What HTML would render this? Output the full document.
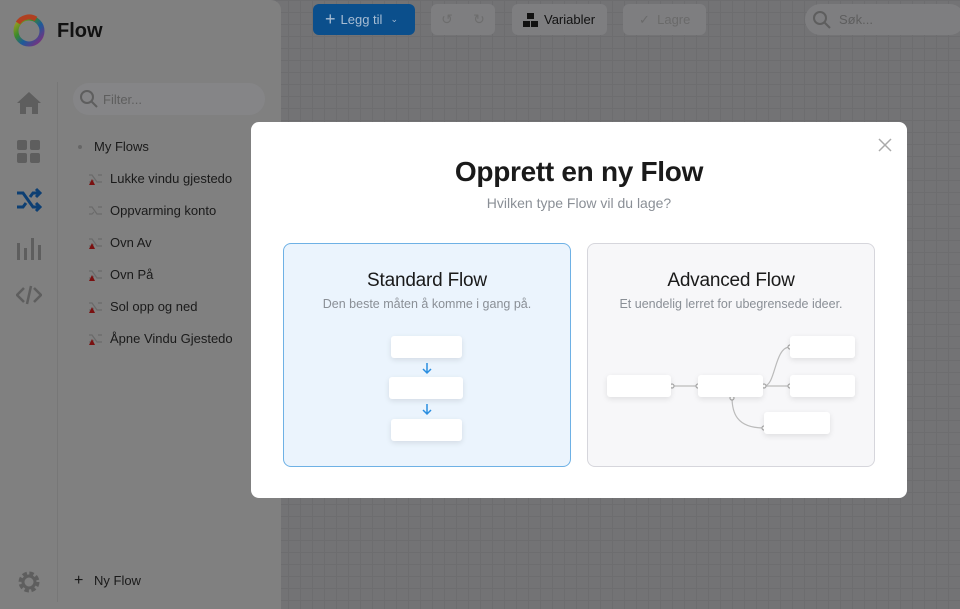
<!DOCTYPE html>
<html><head><meta charset="utf-8"><style>
*{box-sizing:border-box;margin:0;padding:0}
body{width:960px;height:609px;overflow:hidden;position:relative;font-family:"Liberation Sans",sans-serif;background:#737375;
background-image:linear-gradient(#6d6d6f 1px,transparent 1px),linear-gradient(90deg,#6d6d6f 1px,transparent 1px);background-size:12px 12px}
.side{position:absolute;left:0;top:0;width:281px;height:609px;background:#808080;border-radius:0 10px 0 0}
.rail{position:absolute;left:57px;top:82px;width:1px;height:520px;background:#777}
.abs{position:absolute}
.item{position:absolute;left:110px;font-size:13px;color:#1a1a1a}
.btn{position:absolute;top:4px;height:31px;border-radius:6px;background:#7e7e80;font-size:13px;color:#111;display:flex;align-items:center}
.modal{position:absolute;left:251px;top:122px;width:656px;height:376px;background:#fff;border-radius:8px}
.card{position:absolute;top:121px;width:288px;height:224px;border-radius:8px;text-align:center}
.card h2{font-size:19px;font-weight:normal;color:#1a1a1a;margin-top:26px;letter-spacing:-.2px}
.card p{font-size:12.5px;color:#8a8f96;margin-top:5px}
.n{position:absolute;height:22px;background:#fff;border-radius:3px;box-shadow:0 2px 6px rgba(0,0,0,.1)}
</style></head><body>
<div class="side"></div>
<div class="rail"></div>
<svg class="abs" style="left:12px;top:14px" width="34" height="34"><defs><linearGradient id="g" x1="0" y1="0" x2="1" y2="1"><stop offset="0" stop-color="#b2a020"/><stop offset=".35" stop-color="#3a8a2a"/><stop offset=".6" stop-color="#1c5a9a"/><stop offset="1" stop-color="#8a2a7a"/></linearGradient></defs><circle cx="17" cy="17" r="13" fill="none" stroke="url(#g)" stroke-width="5"/><path d="M6 9A13 13 0 0 1 24 5" stroke="#b04020" stroke-width="5" fill="none"/></svg>
<div class="abs" style="left:57px;top:20px;font-size:20px;font-weight:bold;color:#111">Flow</div>
<svg class="abs" style="left:16px;top:90px" width="26" height="26"><path d="M13 2 1 13h3v11h6v-7h6v7h6V13h3z" fill="#5e5e5e"/></svg>
<svg class="abs" style="left:16px;top:139px" width="26" height="26"><rect x="1" y="1" width="10" height="10" rx="2" fill="#5e5e5e"/><rect x="14" y="1" width="10" height="10" rx="2" fill="#5e5e5e"/><rect x="1" y="14" width="10" height="10" rx="2" fill="#5e5e5e"/><rect x="14" y="14" width="10" height="10" rx="2" fill="#5e5e5e"/></svg>
<svg class="abs" style="left:16px;top:187px" width="26" height="26" fill="none" stroke="#0d3f73" stroke-width="3"><path d="M1 6h6l10 14h6M1 20h6l3-4M14 10l3-4h6M20 2l4 4-4 4M20 16l4 4-4 4"/></svg>
<svg class="abs" style="left:16px;top:235px" width="26" height="26" fill="#5e5e5e"><rect x="1" y="8" width="3" height="17"/><rect x="8" y="13" width="3" height="12"/><rect x="15" y="3" width="3" height="22"/><rect x="22" y="10" width="3" height="15"/></svg>
<svg class="abs" style="left:16px;top:284px" width="26" height="22" fill="none" stroke="#5e5e5e" stroke-width="2.5"><path d="M8 4 1 11l7 7M18 4l7 7-7 7M15 2l-4 18"/></svg>
<svg class="abs" style="left:16px;top:569px" width="26" height="26"><circle cx="13" cy="13" r="8" fill="none" stroke="#5e5e5e" stroke-width="5" stroke-dasharray="4 2.3"/><circle cx="13" cy="13" r="6" fill="none" stroke="#5e5e5e" stroke-width="3"/></svg>
<div class="abs" style="left:73px;top:83px;width:192px;height:32px;border-radius:16px;background:#858587"></div>
<svg class="abs" style="left:80px;top:90px" width="18" height="18" fill="none" stroke="#5e5e5e" stroke-width="2"><circle cx="7" cy="7" r="6"/><path d="M11 11l6 6"/></svg>
<div class="abs" style="left:103px;top:92px;font-size:13px;color:#5e5e5e">Filter...</div>
<div class="abs" style="left:78px;top:145px;width:4px;height:4px;border-radius:2px;background:#666"></div>
<div class="abs" style="left:94px;top:139px;font-size:13px;color:#1a1a1a">My Flows</div>
<div class="item" style="top:171px">Lukke vindu gjestedo</div>
<div class="item" style="top:203px">Oppvarming konto</div>
<div class="item" style="top:235px">Ovn Av</div>
<div class="item" style="top:267px">Ovn På</div>
<div class="item" style="top:299px">Sol opp og ned</div>
<div class="item" style="top:331px">Åpne Vindu Gjestedo</div>
<svg class="abs" style="left:88px;top:172px" width="16" height="180"><g id="ic"><path d="M1 3h3l5 7h5M1 10h3l2-2M10 3h4" fill="none" stroke="#6a6a6a" stroke-width="1.2"/><path d="M1 13l3-6 3 6z" fill="#7a1010"/></g><use href="#ic" y="64"/><use href="#ic" y="96"/><use href="#ic" y="128"/><use href="#ic" y="160"/><path d="M1 35h3l5 7h5M1 42h3l2-2M10 35h4" fill="none" stroke="#6a6a6a" stroke-width="1.2"/></svg>
<div class="abs" style="left:74px;top:572px;font-size:16px;color:#1a1a1a">+</div>
<div class="abs" style="left:94px;top:573px;font-size:13px;color:#1a1a1a">Ny Flow</div>
<div class="btn" style="left:313px;width:102px;background:#0b4f8c;color:#a8bdd3;padding-left:12px"><span style="font-size:18px;margin-right:5px">+</span>Legg til <span style="margin-left:8px;font-size:9px">&#8964;</span></div>
<div class="btn" style="left:431px;width:64px;color:#6d6d6d;justify-content:space-around;font-size:14px"><span>↺</span><span>↻</span></div>
<div class="btn" style="left:512px;width:95px;padding-left:11px"><svg width="16" height="16" style="margin-right:5px"><rect x="4" y="1" width="7" height="6" fill="#111"/><rect x="0" y="9" width="7" height="6" fill="#111"/><rect x="8" y="9" width="7" height="6" fill="#111"/></svg>Variabler</div>
<div class="btn" style="left:623px;width:83px;color:#6a6a6a;padding-left:16px">✓&nbsp; Lagre</div>
<div class="btn" style="left:805px;width:160px;border-radius:16px;color:#5e5e5e;padding-left:8px"><svg width="18" height="18" fill="none" stroke="#5e5e5e" stroke-width="2" style="margin-right:8px"><circle cx="7" cy="7" r="6"/><path d="M11 11l6 6"/></svg>Søk...</div>
<div class="modal">
 <svg class="abs" style="left:627px;top:16px" width="14" height="14" stroke="#aaa" stroke-width="1.5"><path d="M1 1l12 12M13 1 1 13"/></svg>
 <div class="abs" style="left:0;width:656px;top:34px;text-align:center;font-size:28px;font-weight:bold;color:#1a1a1a;letter-spacing:-.3px">Opprett en ny Flow</div>
 <div class="abs" style="left:0;width:656px;top:73px;text-align:center;font-size:14px;color:#8a8f96">Hvilken type Flow vil du lage?</div>
 <div class="card" style="left:32px;background:#ebf4fd;border:1.5px solid #6eb1e5">
  <h2>Standard Flow</h2><p>Den beste måten å komme i gang på.</p>
  <div class="n" style="left:107px;top:92px;width:71px"></div>
  <div class="n" style="left:105px;top:133px;width:74px"></div>
  <div class="n" style="left:107px;top:175px;width:71px"></div>
  <svg class="abs" style="left:137px;top:118px" width="12" height="60" fill="none" stroke="#2a8ee0" stroke-width="1.5"><path d="M6 1v10M2 7l4 4 4-4M6 42v10M2 48l4 4 4-4"/></svg>
 </div>
 <div class="card" style="left:336px;background:#f7f7f9;border:1.5px solid #d6d6dc">
  <h2>Advanced Flow</h2><p>Et uendelig lerret for ubegrensede ideer.</p>
  <svg class="abs" style="left:0;top:0" width="288" height="224" fill="none" stroke="#bbb" stroke-width="1.2"><path d="M84 142h26M176 142h26M176 142c12 0 10-39 26-39M144 153c0 15 4 31 32 31"/><g fill="#fff" stroke="#aaa"><circle cx="84" cy="142" r="2"/><circle cx="110" cy="142" r="2"/><circle cx="176" cy="142" r="2"/><circle cx="202" cy="142" r="2"/><circle cx="202" cy="103" r="2"/><circle cx="144" cy="154" r="2"/><circle cx="176" cy="184" r="2"/></g></svg>
  <div class="n" style="left:19px;top:131px;width:64px"></div>
  <div class="n" style="left:110px;top:131px;width:65px"></div>
  <div class="n" style="left:202px;top:92px;width:65px"></div>
  <div class="n" style="left:202px;top:131px;width:65px"></div>
  <div class="n" style="left:176px;top:168px;width:66px"></div>
 </div>
</div>
</body></html>
